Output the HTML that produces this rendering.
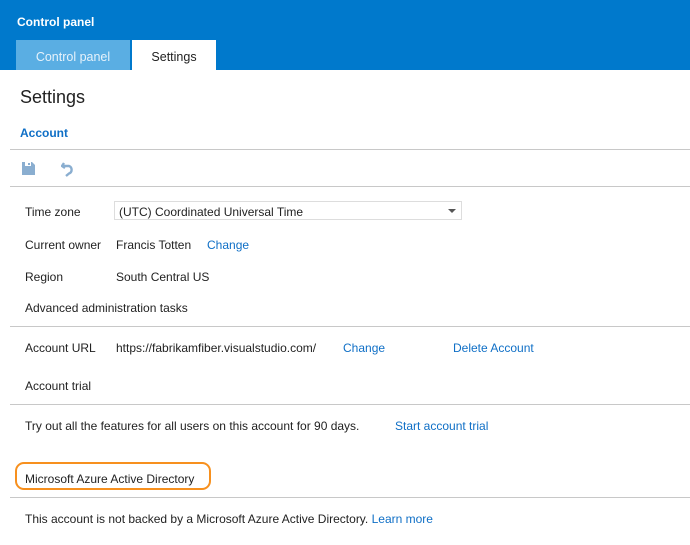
<!DOCTYPE html>
<html><head><style>
body{margin:0;width:690px;height:545px;background:#fff;font-family:"Liberation Sans",sans-serif;font-size:12px;color:#222;position:relative;overflow:hidden}
.a{position:absolute;white-space:nowrap}
.hdr{position:absolute;left:0;top:0;width:690px;height:70px;background:#0079cc}
.ln{position:absolute;left:10px;width:680px;height:1px;background:#c8c8c8}
.lk{color:#0f6fc6}
</style></head><body>
<div class="hdr"></div>
<div class="a" style="left:17px;top:15px;color:#fff;font-weight:bold;font-size:12px">Control panel</div>
<div class="a" style="left:16px;top:40px;width:114px;height:30px;background:#5aaee3;color:#e6f2fb;text-align:center;line-height:34px;font-size:12.5px">Control panel</div>
<div class="a" style="left:132px;top:40px;width:84px;height:30px;background:#fff;color:#222;text-align:center;line-height:34px;font-size:12.5px">Settings</div>
<div class="a" style="left:20px;top:87px;font-size:18px;color:#222">Settings</div>
<div class="a" style="left:20px;top:126px;font-weight:bold;color:#0f6fc6">Account</div>
<div class="ln" style="top:149px"></div>
<svg class="a" style="left:22px;top:162px" width="13" height="13" viewBox="0 0 13 13"><path d="M0 0H10L13 3V13H0Z" fill="#8aaed0"/><rect x="3" y="0" width="6" height="4" fill="#fff"/><rect x="6" y="1" width="2" height="2" fill="#8aaed0"/></svg>
<svg class="a" style="left:61px;top:161px" width="14" height="16" viewBox="0 0 14 16"><path d="M3 2 L1 5 L4 7 M1.5 5 H8 A4 4 0 0 1 8 12.5 L5 15" fill="none" stroke="#8aaed0" stroke-width="2.4"/></svg>
<div class="ln" style="top:186px"></div>
<div class="a" style="left:25px;top:205px">Time zone</div>
<div class="a" style="left:114px;top:201px;width:348px;height:19px;border:1px solid #ddd;box-sizing:border-box;padding:3px 4px">(UTC) Coordinated Universal Time</div>
<div class="a" style="left:448px;top:209px;width:0;height:0;border-left:4px solid transparent;border-right:4px solid transparent;border-top:4px solid #555"></div>
<div class="a" style="left:25px;top:238px">Current owner</div>
<div class="a" style="left:116px;top:238px">Francis Totten</div>
<div class="a lk" style="left:207px;top:238px">Change</div>
<div class="a" style="left:25px;top:270px">Region</div>
<div class="a" style="left:116px;top:270px">South Central US</div>
<div class="a" style="left:25px;top:301px">Advanced administration tasks</div>
<div class="ln" style="top:326px"></div>
<div class="a" style="left:25px;top:341px">Account URL</div>
<div class="a" style="left:116px;top:341px">https://fabrikamfiber.visualstudio.com/</div>
<div class="a lk" style="left:343px;top:341px">Change</div>
<div class="a lk" style="left:453px;top:341px">Delete Account</div>
<div class="a" style="left:25px;top:379px">Account trial</div>
<div class="ln" style="top:404px"></div>
<div class="a" style="left:25px;top:419px">Try out all the features for all users on this account for 90 days.</div>
<div class="a lk" style="left:395px;top:419px">Start account trial</div>
<div class="a" style="left:15px;top:462px;width:196px;height:28px;border:2.5px solid #f7901e;border-radius:9px;box-sizing:border-box"></div>
<div class="a" style="left:25px;top:472px">Microsoft Azure Active Directory</div>
<div class="ln" style="top:497px"></div>
<div class="a" style="left:25px;top:512px">This account is not backed by a Microsoft Azure Active Directory. <span class="lk">Learn more</span></div>
</body></html>
